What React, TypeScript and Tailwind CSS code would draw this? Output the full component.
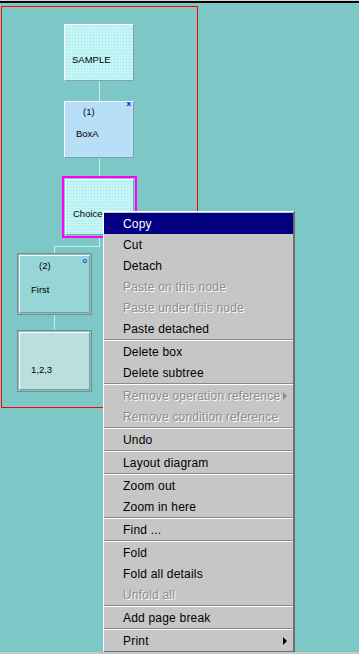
type Item = { label?: string; disabled?: boolean; active?: boolean; sub?: boolean; sep?: boolean }

const menu: Item[] = [
  { label: "Copy", active: true },
  { label: "Cut" },
  { label: "Detach" },
  { label: "Paste on this node", disabled: true },
  { label: "Paste under this node", disabled: true },
  { label: "Paste detached" },
  { sep: true },
  { label: "Delete box" },
  { label: "Delete subtree" },
  { sep: true },
  { label: "Remove operation reference", disabled: true, sub: true },
  { label: "Remove condition reference", disabled: true },
  { sep: true },
  { label: "Undo" },
  { sep: true },
  { label: "Layout diagram" },
  { sep: true },
  { label: "Zoom out" },
  { label: "Zoom in here" },
  { sep: true },
  { label: "Find ..." },
  { sep: true },
  { label: "Fold" },
  { label: "Fold all details" },
  { label: "Unfold all", disabled: true },
  { sep: true },
  { label: "Add page break" },
  { sep: true },
  { label: "Print", sub: true },
]

const dots =
  "[background-image:radial-gradient(#a6dfe6_0.6px,transparent_0.7px)] [background-size:3px_3px]"

const ContextMenu = () => (
  <div className="absolute left-[103px] top-[211px] w-[192px] flex flex-col bg-[#c6c6c6] border-t border-l border-t-white border-l-white border-r-2 border-b-2 border-r-[#6e6e6e] border-b-[#6e6e6e] pt-px text-[12px] tracking-[0.2px]">
    {menu.map((it, i) =>
      it.sep ? (
        <div key={i} className="h-[2px] border-t border-t-[#8a8a8a] border-b border-b-white" />
      ) : (
        <div
          key={i}
          className={
            "h-[21px] flex items-center justify-between pl-[19px] pr-[6px] " +
            (it.active
              ? "bg-[#000080] text-white"
              : it.disabled
                ? "text-[#8c8c8c] [text-shadow:1px_1px_0_#ffffff]"
                : "text-black")
          }
        >
          <span>{it.label}</span>
          {it.sub && (
            <span
              className={
                "w-0 h-0 border-y-[4px] border-y-transparent border-l-[4px] " +
                (it.disabled ? "border-l-[#8c8c8c]" : "border-l-black")
              }
            />
          )}
        </div>
      )
    )}
  </div>
)

export default function App() {
  return (
    <div className="relative w-[359px] h-[654px] overflow-hidden bg-[#7dc7c7] font-['Liberation_Sans',Arial,sans-serif]">
      <div className="h-px bg-[#d6d6d6]" />
      <div className="h-[2px] bg-black" />

      {/* page frame */}
      <div className="absolute left-[1px] top-[6px] w-[197px] h-[402px] border border-[#ff0000]" />

      {/* connectors */}
      <div className="absolute left-[99px] top-[81px] w-px h-[20px] bg-[#bff0f0]" />
      <div className="absolute left-[99px] top-[158px] w-px h-[18px] bg-[#bff0f0]" />
      <div className="absolute left-[99px] top-[238px] w-px h-[8px] bg-[#bff0f0]" />
      <div className="absolute left-[54px] top-[246px] w-[46px] h-px bg-[#bff0f0]" />
      <div className="absolute left-[54px] top-[246px] w-px h-[7px] bg-[#bff0f0]" />
      <div className="absolute left-[54px] top-[315px] w-px h-[15px] bg-[#bff0f0]" />

      {/* SAMPLE */}
      <div className={"absolute left-[64px] top-[24px] w-[70px] h-[57px] flex flex-col pt-[28px] pl-[7px] bg-[#c2f5f5] border border-t-white border-l-white border-r-[#7fa5ad] border-b-[#7fa5ad] text-[9.5px] text-black " + dots}>
        <span>SAMPLE</span>
      </div>

      {/* BoxA */}
      <div className="absolute left-[64px] top-[101px] w-[70px] h-[57px] flex flex-col bg-[#b7dff7] border border-t-white border-l-white border-r-[#7fa0b0] border-b-[#7fa0b0] text-[9.5px] text-black">
        <div className="flex justify-between pl-[18px] pr-[2px] h-[12px]">
          <span className="pt-[3px]">(1)</span>
          <span className="text-[8px] leading-none text-[#0000ff] font-bold -mt-[2px]">x</span>
        </div>
        <span className="pl-[11px] pt-[13px]">BoxA</span>
      </div>

      {/* Choice (selected) */}
      <div className="absolute left-[62px] top-[176px] w-[75px] h-[62px] border-2 border-[#ff00ff] p-px">
        <div className={"w-full h-full flex flex-col pt-[27px] pl-[7px] bg-[#c2f5f5] border border-t-white border-l-white border-r-[#7fa5ad] border-b-[#7fa5ad] text-[9.5px] text-black " + dots}>
          <span>Choice</span>
        </div>
      </div>

      {/* First */}
      <div className="absolute left-[17px] top-[253px] w-[75px] h-[62px] border border-[#7b8b8b] p-px">
        <div className="w-full h-full flex flex-col bg-[#97d6d6] border border-t-white border-l-white border-r-[#7b9b9b] border-b-[#7b9b9b] text-[9.5px] text-black">
          <div className="flex justify-between pl-[19px] pr-[2px] h-[14px]">
            <span className="pt-[3px]">(2)</span>
            <span className="text-[8px] leading-none text-[#0000ff] pt-px">o</span>
          </div>
          <span className="pl-[11px] pt-[13px]">First</span>
        </div>
      </div>

      {/* 1,2,3 */}
      <div className="absolute left-[17px] top-[330px] w-[75px] h-[62px] border border-[#7b8b8b] p-px">
        <div className="w-full h-full flex flex-col pt-[30px] pl-[11px] bg-[#bbdfdf] border border-t-white border-l-white border-r-[#7b9b9b] border-b-[#7b9b9b] text-[9.5px] text-black">
          <span>1,2,3</span>
        </div>
      </div>

      <ContextMenu />

      <div className="absolute left-0 bottom-0 w-full h-[2px] bg-[#c8c8c8]" />
    </div>
  )
}
